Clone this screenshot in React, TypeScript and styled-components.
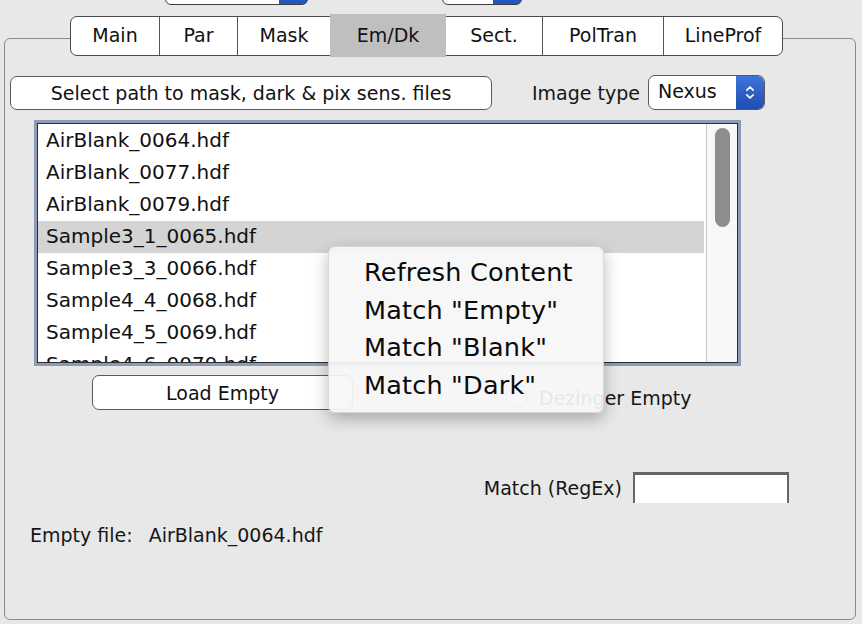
import React from "react";
import styled, { createGlobalStyle } from "styled-components";

const Global = createGlobalStyle`
  html, body { margin: 0; padding: 0; background: #e8e8e8; }
  body { font-family: "DejaVu Sans", "Noto Sans", sans-serif; color: #111; }
  #root { width: 862px; height: 624px; overflow: hidden; }
`;

const Page = styled.div`
  position: relative;
  width: 862px;
  height: 624px;
  overflow: hidden;
  background: #e8e8e8;
  display: flex;
  flex-direction: column;
`;

const TopStrip = styled.div`
  height: 6px;
  overflow: hidden;
  display: flex;
  align-items: flex-end;
`;

const Stub = styled.div<{ $left: number; $width: number; $blue: number }>`
  margin-left: ${(p) => p.$left}px;
  margin-bottom: 1px;
  width: ${(p) => p.$width}px;
  height: 30px;
  box-sizing: border-box;
  border: 1.5px solid #3f3f3f;
  border-radius: 6px;
  background: linear-gradient(to right, #fff calc(100% - ${(p) => p.$blue}px), #2456bd calc(100% - ${(p) => p.$blue}px));
  overflow: hidden;
`;

const Panel = styled.div`
  margin: 32px 0 0 4px;
  width: 852px;
  height: 582px;
  box-sizing: border-box;
  border: 1px solid #8c8c8c;
  border-radius: 6px;
  display: flex;
  flex-direction: column;
  font-size: 19px;
`;

const TabBar = styled.div`
  margin: -23px 0 0 65px;
  display: flex;
  height: 40px;
  box-sizing: border-box;
  border: 1.5px solid #4a4a4a;
  border-radius: 7px;
  background: #fff;
  align-self: flex-start;
`;

const Tab = styled.div<{ $w: number; $active?: boolean; $first?: boolean }>`
  width: ${(p) => p.$w}px;
  box-sizing: border-box;
  display: flex;
  align-items: center;
  justify-content: center;
  padding-bottom: ${(p) => (p.$active ? "0" : "2px")};
  border-left: ${(p) => (p.$first || p.$active ? "none" : "1.5px solid #555")};
  background: ${(p) => (p.$active ? "#bfbfbf" : "transparent")};
  margin-top: ${(p) => (p.$active ? "-3px" : "0")};
  margin-bottom: ${(p) => (p.$active ? "-1.5px" : "0")};
  color: #111;
  font-size: 19px;
`;

const ToolRow = styled.div`
  display: flex;
  align-items: center;
  margin-top: 19px;
  height: 36px;
`;

const PushButton = styled.div<{ $w: number; $ml: number; $h?: number }>`
  margin-left: ${(p) => p.$ml}px;
  width: ${(p) => p.$w}px;
  height: ${(p) => p.$h ?? 34}px;
  box-sizing: border-box;
  border: 1.5px solid #5a5a5a;
  border-radius: 7px;
  background: #fff;
  display: flex;
  align-items: center;
  justify-content: center;
  font-size: 19px;
  color: #111;
`;

const Label = styled.span<{ $ml?: number }>`
  margin-left: ${(p) => p.$ml ?? 0}px;
  font-size: 19px;
  color: #161616;
  white-space: nowrap;
`;

const Popup = styled.div`
  margin-left: 8px;
  margin-top: -2px;
  width: 117px;
  height: 35px;
  box-sizing: border-box;
  border: 1.5px solid #5a5a5a;
  border-radius: 7px;
  background: #fff;
  display: flex;
  overflow: hidden;
`;

const PopupText = styled.div`
  flex: 1;
  display: flex;
  align-items: center;
  padding-left: 9px;
  padding-bottom: 2px;
  font-size: 19px;
  color: #111;
`;

const PopupArrow = styled.div`
  width: 28px;
  background: linear-gradient(#3f74da, #1f4db3);
  display: flex;
  align-items: center;
  justify-content: center;
`;

const ListFrame = styled.div`
  margin: 9px 0 0 29px;
  width: 707px;
  height: 246px;
  box-sizing: border-box;
  border: 3px solid #8d9bb8;
  display: flex;
`;

const ListInner = styled.div`
  flex: 1;
  border: 1px solid #2e2e2e;
  background: #fff;
  display: flex;
  overflow: hidden;
`;

const Rows = styled.div`
  flex: 1;
  padding: 1px 2px 0 0;
  overflow: hidden;
`;

const Row = styled.div<{ $sel?: boolean }>`
  height: 32px;
  line-height: 31px;
  padding-left: 8px;
  font-size: 20px;
  color: #111;
  background: ${(p) => (p.$sel ? "#d4d4d4" : "transparent")};
  white-space: nowrap;
`;

const Track = styled.div`
  width: 31px;
  border-left: 1px solid #c8c8c8;
  background: #f7f7f7;
  padding: 4px 0 0 8px;
  box-sizing: border-box;
`;

const Thumb = styled.div`
  width: 15px;
  height: 99px;
  border-radius: 8px;
  background: #8d8d8d;
`;

const LoadRow = styled.div`
  display: flex;
  align-items: flex-start;
  margin-top: 9px;
  height: 35px;
`;

const CheckGroup = styled.div`
  margin: 12px 0 0 153px;
  display: flex;
  align-items: center;
  gap: 12px;
`;

const CheckBox = styled.div`
  width: 21px;
  height: 17px;
  box-sizing: border-box;
  border: 1px solid #9a9a9a;
  border-radius: 4px;
  background: #fff;
`;

const MatchRow = styled.div`
  display: flex;
  align-items: center;
  justify-content: flex-end;
  margin-top: 62px;
  padding-right: 66px;
  gap: 11px;
`;

const MatchInput = styled.div`
  width: 156px;
  height: 31px;
  box-sizing: border-box;
  border-top: 3px solid #666;
  border-left: 2px solid #666;
  border-right: 2px solid #666;
  background: #fff;
`;

const InfoRow = styled.div`
  display: flex;
  gap: 16px;
  margin: 21px 0 0 25px;
  font-size: 19px;
  color: #161616;
`;

const Menu = styled.div`
  position: absolute;
  left: 328px;
  top: 246px;
  width: 276px;
  height: 167px;
  box-sizing: border-box;
  padding: 7px 0 8px 35px;
  background: rgba(246, 246, 246, 0.93);
  border: 0.5px solid rgba(0, 0, 0, 0.12);
  border-radius: 7px;
  box-shadow: 0 6px 16px rgba(0, 0, 0, 0.28);
  display: flex;
  flex-direction: column;
`;

const MenuItem = styled.div`
  height: 38px;
  line-height: 37px;
  font-size: 25.5px;
  letter-spacing: 0.2px;
  color: #0a0a0a;
  white-space: nowrap;
`;

const Chevrons = () => (
  <svg width="10" height="17" viewBox="0 0 10 17" fill="none">
    <path d="M1.8 6.2 L5 3 L8.2 6.2" stroke="#fff" strokeWidth="1.7" strokeLinecap="round" strokeLinejoin="round" />
    <path d="M1.8 10.8 L5 14 L8.2 10.8" stroke="#fff" strokeWidth="1.7" strokeLinecap="round" strokeLinejoin="round" />
  </svg>
);

const tabs = [
  { label: "Main", w: 88 },
  { label: "Par", w: 78 },
  { label: "Mask", w: 93 },
  { label: "Em/Dk", w: 116, active: true },
  { label: "Sect.", w: 96 },
  { label: "PolTran", w: 121 },
  { label: "LineProf", w: 119 },
];

const files = [
  "AirBlank_0064.hdf",
  "AirBlank_0077.hdf",
  "AirBlank_0079.hdf",
  "Sample3_1_0065.hdf",
  "Sample3_3_0066.hdf",
  "Sample4_4_0068.hdf",
  "Sample4_5_0069.hdf",
  "Sample4_6_0070.hdf",
];

const menuItems = ["Refresh Content", 'Match "Empty"', 'Match "Blank"', 'Match "Dark"'];

export default function App() {
  return (
    <Page>
      <Global />
      <TopStrip>
        <Stub $left={165} $width={143} $blue={28} />
        <Stub $left={134} $width={80} $blue={28} />
      </TopStrip>
      <Panel>
        <TabBar>
          {tabs.map((t, i) => (
            <Tab key={t.label} $w={t.w} $active={t.active} $first={i === 0 || tabs[i - 1].active}>
              {t.label}
            </Tab>
          ))}
        </TabBar>
        <ToolRow>
          <PushButton $w={482} $ml={5}>Select path to mask, dark &amp; pix sens. files</PushButton>
          <Label $ml={40}>Image type</Label>
          <Popup>
            <PopupText>Nexus</PopupText>
            <PopupArrow>
              <Chevrons />
            </PopupArrow>
          </Popup>
        </ToolRow>
        <ListFrame>
          <ListInner>
            <Rows>
              {files.map((f, i) => (
                <Row key={f} $sel={i === 3}>
                  {f}
                </Row>
              ))}
            </Rows>
            <Track>
              <Thumb />
            </Track>
          </ListInner>
        </ListFrame>
        <LoadRow>
          <PushButton $w={261} $ml={87} $h={35}>Load Empty</PushButton>
          <CheckGroup>
            <CheckBox />
            <Label>Dezinger Empty</Label>
          </CheckGroup>
        </LoadRow>
        <MatchRow>
          <Label>Match (RegEx)</Label>
          <MatchInput />
        </MatchRow>
        <InfoRow>
          <span>Empty file:</span>
          <span>AirBlank_0064.hdf</span>
        </InfoRow>
      </Panel>
      <Menu>
        {menuItems.map((m) => (
          <MenuItem key={m}>{m}</MenuItem>
        ))}
      </Menu>
    </Page>
  );
}
